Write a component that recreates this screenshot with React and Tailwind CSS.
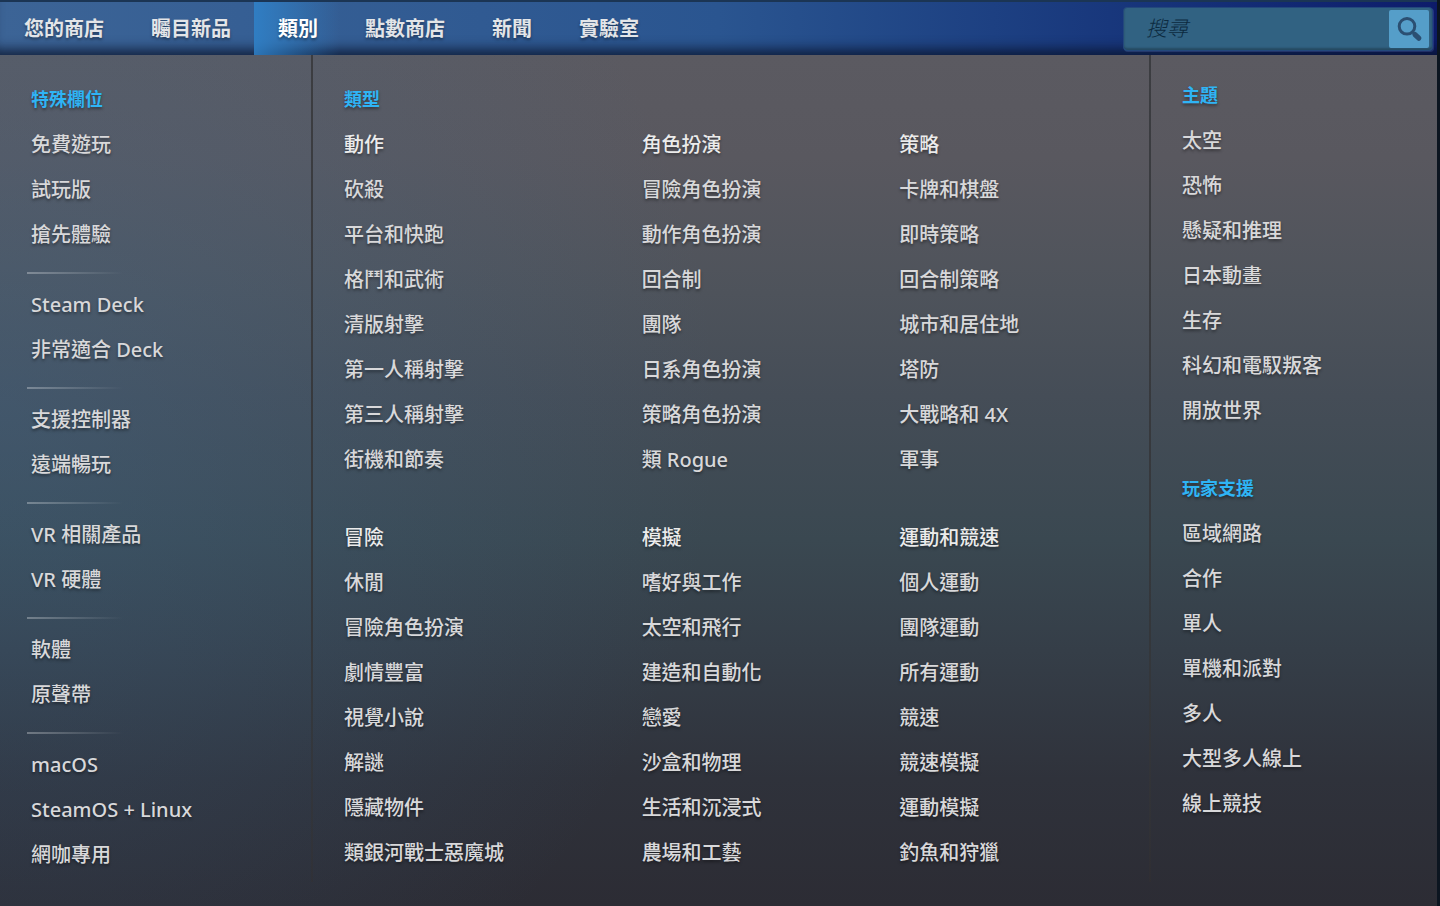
const tabs = ["您的商店", "矚目新品", "類別", "點數商店", "新聞", "實驗室"];

const special = [
  ["免費遊玩", "試玩版", "搶先體驗"],
  ["Steam Deck", "非常適合 Deck"],
  ["支援控制器", "遠端暢玩"],
  ["VR 相關產品", "VR 硬體"],
  ["軟體", "原聲帶"],
  ["macOS", "SteamOS + Linux", "網咖專用"],
];

// first entry of every list is the parent genre
const genres = [
  ["動作", "砍殺", "平台和快跑", "格鬥和武術", "清版射擊", "第一人稱射擊", "第三人稱射擊", "街機和節奏"],
  ["角色扮演", "冒險角色扮演", "動作角色扮演", "回合制", "團隊", "日系角色扮演", "策略角色扮演", "類 Rogue"],
  ["策略", "卡牌和棋盤", "即時策略", "回合制策略", "城市和居住地", "塔防", "大戰略和 4X", "軍事"],
  ["冒險", "休閒", "冒險角色扮演", "劇情豐富", "視覺小說", "解謎", "隱藏物件", "類銀河戰士惡魔城"],
  ["模擬", "嗜好與工作", "太空和飛行", "建造和自動化", "戀愛", "沙盒和物理", "生活和沉浸式", "農場和工藝"],
  ["運動和競速", "個人運動", "團隊運動", "所有運動", "競速", "競速模擬", "運動模擬", "釣魚和狩獵"],
];

const themes = ["太空", "恐怖", "懸疑和推理", "日本動畫", "生存", "科幻和電馭叛客", "開放世界"];
const players = ["區域網路", "合作", "單人", "單機和派對", "多人", "大型多人線上", "線上競技"];

function Heading({ children }) {
  return (
    <h2 className="text-lg leading-[45px] font-bold text-[#2fb4f5]">{children}</h2>
  );
}

function Links({ items, lead = false }) {
  return (
    <ul>
      {items.map((item, i) => (
        <li key={item}>
          <a
            href="#"
            className={`block text-xl leading-[45px] font-medium hover:text-white ${
              lead && i === 0 ? "text-[#ebebeb]" : "text-[#d8d8da]"
            }`}
          >
            {item}
          </a>
        </li>
      ))}
    </ul>
  );
}

function Divider() {
  return (
    <div className="w-0.5 shrink-0 mb-6 bg-linear-to-b from-[#3c3d41] via-[#34373b] via-70% to-[#34302f]/40" />
  );
}

function SearchBox() {
  return (
    <form
      onSubmit={(e) => e.preventDefault()}
      className="flex h-[44px] w-[310px] items-center rounded-sm border border-[#23487c] bg-[#316282] pr-[3px] shadow-[inset_0_-2px_2px_rgba(0,0,0,0.25),1px_1px_0_rgba(120,150,220,0.2)]"
    >
      <input
        type="text"
        aria-label="搜尋"
        placeholder="搜尋"
        className="min-w-0 flex-1 bg-transparent pl-[22px] text-[21px] font-light text-white italic outline-none placeholder:text-[#0c2a3f]"
      />
      <button
        type="submit"
        aria-label="搜尋"
        className="flex h-[38px] w-10 items-center justify-center rounded-xs bg-[#559ec9]"
      >
        <svg width="28" height="28" viewBox="0 0 28 28" fill="none" stroke="#2b4f72">
          <circle cx="12" cy="11.3" r="7.8" strokeWidth="3" />
          <path d="M17.4 17 L20 19.4" strokeWidth="2" />
          <path d="M20 19.6 L23.8 23.2" strokeWidth="5.2" strokeLinecap="round" />
        </svg>
      </button>
    </form>
  );
}

export default function App() {
  return (
    <div className="min-h-screen flex flex-col bg-[#0c1520] pr-[3px] font-['Noto_Sans','Noto_Sans_CJK_TC',sans-serif] [text-shadow:0_2px_3px_rgba(0,0,0,0.4)]">
      <header className="flex justify-between border-t-2 border-[#1b3554] bg-linear-to-r from-[#3c6496] from-0% via-[#2a5590] via-50% to-[#0e1c6b] to-100% shadow-[inset_0_-14px_12px_-8px_rgba(8,18,40,0.75)]">
        <nav className="flex gap-px">
          {tabs.map((tab) => (
            <a
              key={tab}
              href="#"
              className={`pl-6 pr-[22px] text-xl leading-[53px] font-bold ${
                tab === "類別"
                  ? "bg-linear-to-r from-[#2f83cb]/85 to-[#2f6ca6]/0 text-white"
                  : "text-[#e3e5e8]"
              }`}
            >
              {tab}
            </a>
          ))}
        </nav>
        <div className="flex items-center pr-1">
          <SearchBox />
        </div>
      </header>

      <main className="grid flex-1 grid-cols-[313fr_838fr_286fr] bg-[radial-gradient(ellipse_50%_85%_at_0%_42%,rgba(62,106,146,0.34),rgba(62,106,146,0)),linear-gradient(to_bottom,#5b5a61_0%,#59585f_12%,#4e535b_28%,#454d57_40%,#3a4851_57%,#353e48_70%,#2f323b_85%,#2c2c34_100%)]">
        <section className="flex justify-between">
          <div className="flex-1 pt-[22px] pl-[31px]">
            <Heading>特殊欄位</Heading>
            {special.map((group, i) => (
              <div key={group[0]}>
                {i > 0 && (
                  <hr className="mt-[15px] mb-2 -ml-1 h-0.5 w-24 border-0 bg-linear-to-r from-white/30 to-white/0" />
                )}
                <Links items={group} />
              </div>
            ))}
          </div>
          <Divider />
        </section>

        <section className="flex">
          <div className="flex-1 pt-[22px] pl-[31px]">
            <Heading>類型</Heading>
            <div className="grid grid-cols-[298fr_258fr_250fr] gap-y-[33px]">
              {genres.map((list) => (
                <Links key={list[0]} items={list} lead />
              ))}
            </div>
          </div>
          <Divider />
        </section>

        <section className="flex flex-col gap-[33px] pt-[18px] pl-[31px]">
          <div>
            <Heading>主題</Heading>
            <Links items={themes} />
          </div>
          <div>
            <Heading>玩家支援</Heading>
            <Links items={players} />
          </div>
        </section>
      </main>
    </div>
  );
}
